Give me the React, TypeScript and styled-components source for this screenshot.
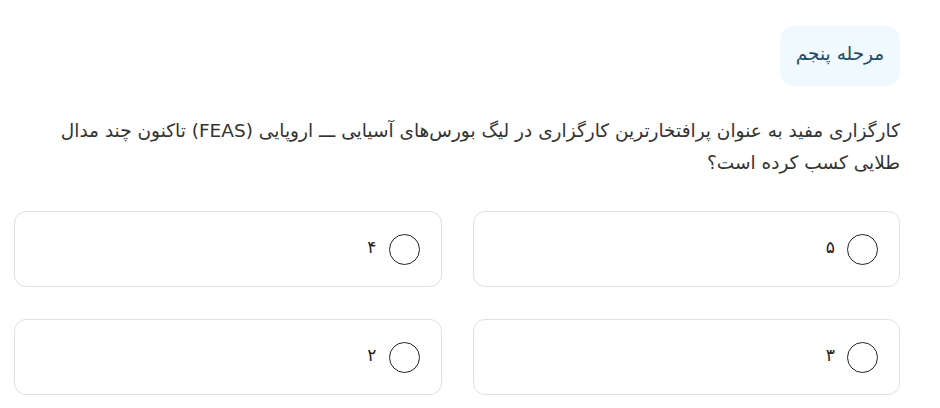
import React, {useState} from 'react';
import styled, {createGlobalStyle} from 'styled-components';

const options = [
    {id: 1, label: '۵'},
    {id: 2, label: '۴'},
    {id: 3, label: '۳'},
    {id: 4, label: '۲'},
];

export default function App() {
    const [selected, setSelected] = useState<number | null>(null);

    return (
        <>
            <GlobalStyle/>
            <Page dir="rtl">
                <StepBadge>مرحله پنجم</StepBadge>
                <Question>
                    کارگزاری مفید به عنوان پرافتخارترین کارگزاری در لیگ بورس‌های آسیایی ـــ اروپایی (FEAS) تاکنون چند مدال طلایی کسب کرده است؟
                </Question>
                <OptionsGrid>
                    {options.map((option) => (
                        <OptionCard key={option.id} onClick={() => setSelected(option.id)}>
                            <Radio $checked={selected === option.id}/>
                            <OptionLabel>{option.label}</OptionLabel>
                        </OptionCard>
                    ))}
                </OptionsGrid>
            </Page>
        </>
    );
}

const GlobalStyle = createGlobalStyle`
  body {
    margin: 0;
    background: #fff;
    font-family: "DejaVu Sans", "Noto Sans", sans-serif;
  }
`;

const Page = styled.div`
  width: 886px;
  margin-left: 14px;
  padding-top: 26px;
  display: flex;
  flex-direction: column;
  align-items: flex-start;
`;

const StepBadge = styled.div`
  height: 60px;
  width: 120px;
  box-sizing: border-box;
  padding-bottom: 5px;
  display: flex;
  align-items: center;
  justify-content: center;
  border-radius: 14px;
  background: #f0fafe;
  color: #1b4d70;
  font-size: 18.5px;
`;

const Question = styled.p`
  margin: 29px 0 0;
  padding-left: 40px;
  font-size: 18.5px;
  line-height: 32px;
  color: #333;
`;

const OptionsGrid = styled.div`
  margin-top: 32px;
  width: 100%;
  display: grid;
  grid-template-columns: 1fr 1fr;
  column-gap: 31px;
  row-gap: 32px;
`;

const OptionCard = styled.div`
  height: 76px;
  box-sizing: border-box;
  border: 1px solid #dedfe6;
  border-radius: 12px;
  display: flex;
  align-items: center;
  gap: 12px;
  padding-right: 21px;
  cursor: pointer;
`;

const Radio = styled.span<{$checked: boolean}>`
  width: 31px;
  height: 31px;
  box-sizing: border-box;
  border-radius: 50%;
  border: 1px solid #222;
  background: ${({$checked}) => ($checked ? '#1b4d70' : '#fff')};
  flex-shrink: 0;
`;

const OptionLabel = styled.span`
  font-size: 17px;
  color: #222;
  margin-bottom: 5px;
`;
